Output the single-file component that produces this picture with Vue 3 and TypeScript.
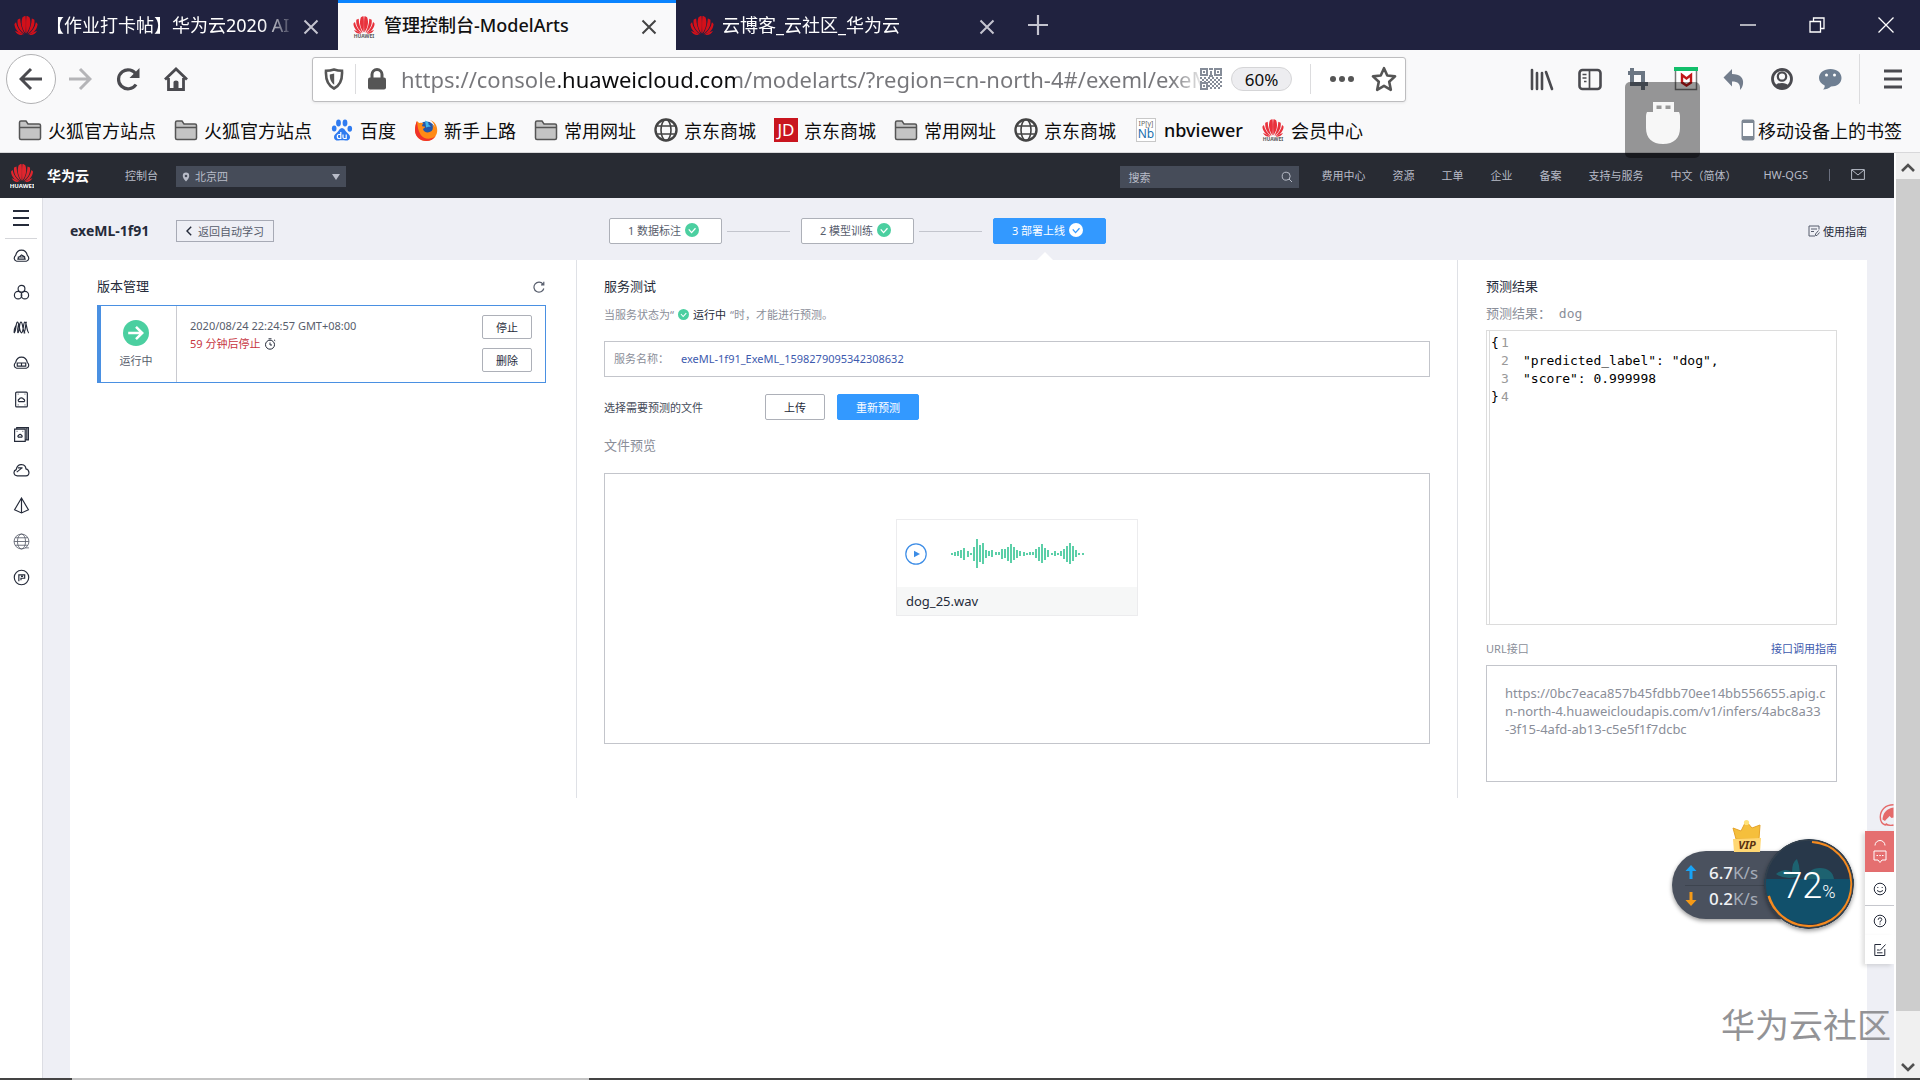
<script setup lang="ts">
import { ref } from 'vue'

interface Tab { title: string; active: boolean }
interface Bookmark { icon: string; label: string }
interface Step { label: string; current: boolean }

const tabs: Tab[] = [
  { title: '【作业打卡帖】华为云2020 AI', active: false },
  { title: '管理控制台-ModelArts', active: true },
  { title: '云博客_云社区_华为云', active: false },
]

const bookmarks: Bookmark[] = [
  { icon: 'folder', label: '火狐官方站点' },
  { icon: 'folder', label: '火狐官方站点' },
  { icon: 'baidu', label: '百度' },
  { icon: 'firefox', label: '新手上路' },
  { icon: 'folder', label: '常用网址' },
  { icon: 'globe', label: '京东商城' },
  { icon: 'jd', label: '京东商城' },
  { icon: 'folder', label: '常用网址' },
  { icon: 'globe', label: '京东商城' },
  { icon: 'nb', label: 'nbviewer' },
  { icon: 'huawei', label: '会员中心' },
]

const toolIcons = ['library', 'sidebar', 'crop', 'mcafee', 'undo', 'account', 'chat']
const toolNames = ['我的足迹', '侧栏', '截图', '安全顾问', '撤销', '账户', '消息']
const headerLinks = ['费用中心', '资源', '工单', '企业', '备案', '支持与服务', '中文（简体）']
const sideIcons = ['cloud-a', 'circles', 'waves', 'cloud-b', 'doc', 'docs', 'cloud-c', 'pyramid', 'net', 'badge']
const sideNames = ['云服务器', '集群', '网络流', '裸金属', '磁盘', '磁盘组', '云容器', '模型', '全球网络', '域名']

const steps: Step[] = [
  { label: '1 数据标注', current: false },
  { label: '2 模型训练', current: false },
  { label: '3 部署上线', current: true },
]

const wave = [2, 4, 5, 8, 12, 6, 2, 14, 29, 17, 21, 8, 5, 7, 3, 3, 10, 9, 14, 19, 13, 8, 5, 4, 2, 3, 3, 9, 14, 19, 12, 7, 2, 5, 2, 5, 10, 16, 21, 15, 7, 2, 2]

const codeLines = [
  { head: '{', text: '' },
  { head: '', text: '"predicted_label": "dog",' },
  { head: '', text: '"score": 0.999998' },
  { head: '}', text: '' },
]

const url = ref('https://console.huaweicloud.com/modelarts/?region=cn-north-4#/exeml/exeML')
const region = ref('北京四')
const keyword = ref('')
</script>

<template>
  <div class="window">
    <svg class="defs" aria-hidden="true">
      <symbol id="i-petals" viewBox="0 0 24 20">
        <path d="M11.6 18.6C8 14 6.6 8 8.4 2.6c.6-1 2-1.6 3.1-1.6.6 4 .5 12 .1 17.600zM12.400 18.600C16 14 17.400 8 15.600 2.600c-.6-1-2-1.600-3.100-1.600-.6 4-.5 12-.1 17.600z" />
        <path d="M10.600 19C6 16 2.800 11 3.600 4.800c.8-.6 1.600-1 2.600-1.200C6.400 9 8 14.500 10.600 19zM13.400 19c4.600-3 7.800-8 7-14.200-.8-.6-1.600-1-2.600-1.200C17.600 9 16 14.500 13.400 19z" />
        <path d="M9.900 19.400C5 18.600 1 15 .4 9.200c.4-.9 1-1.500 1.700-1.900C3 12.500 6 16.500 9.900 19.400zM14.100 19.400c4.900-.8 8.900-4.400 9.500-10.200-.4-.9-1-1.500-1.700-1.900-.9 5.200-3.900 9.200-7.800 12.100z" />
        <path d="M9 20c-3 .3-6-.6-8-4 2 .3 5 2 8 4zM15 20c3 .3 6-.6 8-4-2 .3-5 2-8 4z" />
      </symbol>
      <symbol id="i-close" viewBox="0 0 16 16"><path d="M1.500 1.500l13 13M14.500 1.500l-13 13" fill="none" stroke="currentColor" stroke-width="2" /></symbol>
      <symbol id="i-check" viewBox="0 0 16 16"><circle cx="8" cy="8" r="8" fill="var(--disc)" /><path d="M4.300 7.300l3.200 3.700 4.500-5" fill="none" stroke="var(--tick)" stroke-width="1.500" /></symbol>

      <symbol id="i-folder" viewBox="0 0 24 24"><path d="M1.500 20V4.500q0-1.500 1.500-1.500h5l2 3h11q1.500 0 1.500 1.500V20q0 1.500-1.500 1.500H3q-1.500 0-1.500-1.500zM1.500 9.500h21" fill="#c4c4c4" stroke="#555" stroke-width="1.500" /></symbol>
      <symbol id="i-globe" viewBox="0 0 24 24"><g fill="none" stroke="#444"><circle cx="12" cy="12" r="10.500" stroke-width="2.400" /><ellipse cx="12" cy="12" rx="5" ry="10.500" stroke-width="1.600" /><path d="M2 8h20M2 16h20" stroke-width="1.600" /></g></symbol>
      <symbol id="i-baidu" viewBox="0 0 24 24"><g fill="#2f7bf0"><ellipse cx="8.500" cy="5" rx="2.400" ry="3.400" /><ellipse cx="15" cy="5" rx="2.400" ry="3.400" /><ellipse cx="4.200" cy="10.500" rx="2.300" ry="3" /><ellipse cx="19.800" cy="10.800" rx="2.300" ry="3" /><path d="M12 10c2 0 3 2.300 4.500 4s3.800 3 3.500 5.500c-.3 2.600-2.500 3.300-4.500 3-2.300-.4-4.700-.4-7 0-2 .3-4.200-.4-4.500-3C3.700 17 6 15.700 7.500 14S10 10 12 10z" /></g><path d="M10.800 14v6.500H9q-1.700 0-1.700-2t1.700-2h1.800M13 16.500v2.800q0 1.200 1.200 1.200h2v-4" fill="none" stroke="#fff" stroke-width="1.200" /></symbol>
      <symbol id="i-firefox" viewBox="0 0 24 24"><circle cx="12.500" cy="12" r="8.500" fill="#2456a8" /><path d="M11 2.500c3 1 4 3 3.600 4.500 1.500.3 2 1.200 2 2-2-.5-3 .5-4.500.5z" fill="#3fb5e8" /><path d="M3 3c1 1.200 1.600 1.800 2.600 2C7 4.500 8.500 4.600 9.500 5.200 8.500 6 8 7 8.200 8.200l3 .5c-.2 1.300-1.600 1.600-2.200 2.300.6 3.500 5.600 4.500 8.600 2 1.600-1.500 1.600-4.500.6-6.500 1.400 1 2 2 2.300 3C20.500 6 18.500 3.500 16 2c5 1.500 7.500 6 7.200 11C22.800 19 18 23 12.300 23 6 23 1.300 18.500 1 12.500.9 9 1.800 5.500 3 3z" fill="#ff8a16" /><path d="M1 12.500C1.300 18.500 6 23 12.300 23c4 0 7.500-2 9.500-5-5 4-12 3.500-15-1S3.500 8 3 3C1.800 5.500.9 9 1 12.500z" fill="#f0322b" /></symbol>

      <symbol id="i-library" viewBox="0 0 24 24"><path d="M2 3v19M7 6v16M12 6v16M16 5l6 17" fill="none" stroke="currentColor" stroke-width="2.600" stroke-linecap="round" /></symbol>
      <symbol id="i-sidebar" viewBox="0 0 24 24"><rect x="1.500" y="3" width="21" height="19" rx="3" fill="none" stroke="currentColor" stroke-width="2.600" /><path d="M11.500 3v19M4.500 7.500h4M4.500 11h4M6 14.500h2.500" fill="none" stroke="currentColor" stroke-width="1.700" /></symbol>
      <symbol id="i-crop" viewBox="0 0 24 24"><path d="M6 1v16h16M2 6h15v17" fill="none" stroke="#6b7683" stroke-width="4" /></symbol>
      <symbol id="i-mcafee" viewBox="0 0 24 24"><path d="M1.500 1.500h21v21h-21z" fill="#fff" stroke="#777" stroke-width="1.500" /><path d="M0 0h24v4H0z" fill="#13bf6b" /><path d="M8 8v7.500l4.500 3 4.500-3V8l-4.500 3.500z" fill="none" stroke="#c01818" stroke-width="2.400" /></symbol>
      <symbol id="i-undo" viewBox="0 0 24 24"><path d="M10 2v5c8 0 12 4 11 10-.4 2.500-1.500 4.500-3 6 .7-6-2-8.500-8-8.500v5L1.500 10.500z" fill="#737d8c" /></symbol>
      <symbol id="i-account" viewBox="0 0 24 24"><circle cx="12" cy="12" r="9.500" fill="none" stroke="currentColor" stroke-width="2.800" /><circle cx="12" cy="9.500" r="4.200" fill="none" stroke="currentColor" stroke-width="2.200" /><path d="M5.500 18.500c2-3.500 11-3.500 13 0-3 4-10 4-13 0z" fill="currentColor" /></symbol>
      <symbol id="i-chat" viewBox="0 0 24 24"><path d="M12.500 2C19 2 23.500 5.800 23.500 11S19 19.500 13 19.500c-2 2-5 3-8 3 1.500-1.300 1.800-2.500 1.700-4C3 17 1 14 1 11 1 5.800 6 2 12.500 2z" fill="#6f7f92" /><circle cx="8.500" cy="8" r="1.500" fill="#fff" /><circle cx="16.500" cy="8" r="1.500" fill="#fff" /></symbol>

      <symbol id="i-cloud-a" viewBox="0 0 16 16"><path d="M3.500 12.500C1 12 .3 9 2.500 7 3.200 3.800 5.500 2 8 2s4.800 1.800 5.500 5c2.200 2 1.500 5-1 5.500zM4 10.500h8M5 8.500h6v2H5zM6 8.300L8 6.500l3 1.800" /></symbol>
      <symbol id="i-circles" viewBox="0 0 16 16"><circle cx="8" cy="4.500" r="3.200" /><circle cx="4.800" cy="10.500" r="3.500" /><circle cx="11.200" cy="10.500" r="3.500" /></symbol>
      <symbol id="i-waves" viewBox="0 0 16 16"><path d="M1 13c2 0 1.500-10 3.200-10S6 13 8 13s1.500-10 3.200-10S13 13 15 13M1 13C1 8 2 8 3 6M4.500 13c2 0 1-10 3-10s1.500 10 4 10M4.500 13C4 9 5 6 5.500 4M13 3c-1.500 0-1 10-3 10" /></symbol>
      <symbol id="i-cloud-b" viewBox="0 0 16 16"><path d="M3.500 12.500C1 12 .3 9 2.500 7 3.200 3.800 5.500 2 8 2s4.800 1.800 5.500 5c2.200 2 1.500 5-1 5.500zM3.500 7.500h9M3.500 10.500h9M4 7.500v3M8 7.500v3M12 7.500v3" /></symbol>
      <symbol id="i-doc" viewBox="0 0 16 16"><rect x="2.500" y="1" width="11" height="14" rx="1" /><path d="M5.500 10c-1-.8-.6-2 .4-2.300.4-1.500 3.300-1.700 4 0 1.200.3 1.400 1.700.6 2.300zM4.500 3h.6M11 3h.6M4.500 13h.6M11 13h.6" /></symbol>
      <symbol id="i-docs" viewBox="0 0 16 16"><path d="M1.500 3h10v11.500h-10zM3.500 3V1.500h11V13h-3M13 1.500V13M5 10.500c-.7-.6-.5-1.500.3-1.700.3-1.200 2.200-1.300 2.700 0 .8.200.8 1.200.3 1.700zM3.500 5h.6M9 5h.6" /></symbol>
      <symbol id="i-cloud-c" viewBox="0 0 16 16"><path d="M4 13C.5 13-.2 8.500 3 7.200 3.500 3.500 6 2 8.500 2.500c2.500.3 3.500 2.200 3.700 4 3.500.7 4 6.500 0 6.500zM4.500 5.500h4.500M3.500 9.500L8.500 5.500" /></symbol>
      <symbol id="i-pyramid" viewBox="0 0 16 16"><path d="M8 1L1.500 12 8 15l6.500-3zM8 1v14" /></symbol>
      <symbol id="i-net" viewBox="0 0 16 16"><g stroke="#5a5f6b" stroke-width=".8"><circle cx="8" cy="8" r="7" /><ellipse cx="8" cy="8" rx="3.800" ry="7" /><path d="M1 8h14M2 4.500h12M2 11.500h12M11.500 14h3.500" /></g></symbol>
      <symbol id="i-badge" viewBox="0 0 16 16"><circle cx="8" cy="8" r="6.800" /><path d="M5.500 11.500v-6h5.500v3.200H7.500v2M7.500 7h2" /></symbol>
    </svg>

    <div class="tabbar">
      <div v-for="(tab, i) in tabs" :key="i" class="tab" :class="{ active: tab.active }">
        <svg v-if="tab.active" class="fav" viewBox="0 0 24 24"><use href="#i-petals" x="1" width="22" height="19" fill="#e8323c" /><text class="word" x="12" y="23" text-anchor="middle">HUAWEI</text></svg>
        <svg v-else class="fav fav-red" viewBox="0 0 24 24"><use href="#i-petals" width="24" height="20" /></svg>
        <button class="tab-title">{{ tab.title }}</button>
        <button class="tab-close" aria-label="关闭标签页"><svg><use href="#i-close" /></svg></button>
      </div>
      <button class="new-tab" aria-label="新标签页"><svg viewBox="0 0 22 22"><path d="M11 0v22M0 11h22" stroke="currentColor" stroke-width="2.400" /></svg></button>
      <div class="win-controls">
        <button aria-label="最小化"><svg viewBox="0 0 16 16"><path d="M0 8h16" /></svg></button>
        <button aria-label="还原"><svg viewBox="0 0 16 16"><path d="M1 4.500h10.500V15H1zM4.500 4V1H15v10.500h-3" /></svg></button>
        <button aria-label="关闭"><svg viewBox="0 0 16 16"><path d="M.5.500l15 15M15.500.500l-15 15" /></svg></button>
      </div>
    </div>

    <div class="navbar">
      <div class="nav-left">
        <button class="back" aria-label="后退"><svg viewBox="0 0 24 24"><path d="M23 12H2M12 2L2 12l10 10" fill="none" stroke="currentColor" stroke-width="3" /></svg></button>
        <button class="forward" aria-label="前进"><svg viewBox="0 0 24 24"><path d="M1 12h21M12 2l10 10-10 10" fill="none" stroke="currentColor" stroke-width="3" /></svg></button>
        <button aria-label="刷新"><svg viewBox="0 0 24 24"><path d="M20 17.500A9.500 9.500 0 1 1 20.500 8" fill="none" stroke="currentColor" stroke-width="3.200" /><path d="M23.500 1v10h-10z" fill="currentColor" /></svg></button>
        <button aria-label="主页"><svg viewBox="0 0 24 24"><path d="M1 12.500L12 2l11 10.500M4.500 11v11.500h15V11" fill="none" stroke="currentColor" stroke-width="2.800" /><path d="M9.500 22v-7q0-1.500 2.500-1.500t2.500 1.500v7z" fill="currentColor" /></svg></button>
      </div>
      <div class="urlbar">
        <svg class="shield" viewBox="0 0 20 22"><path d="M10 1.500c3 1 5.500 1.300 8 1.300C18.500 11 17 17 10 20.500 3 17 1.500 11 2 2.800c2.500 0 5-.3 8-1.300z" fill="none" stroke="#555" stroke-width="2.600" /><path d="M10.200 5.500v11.200C6.500 14 5.600 10 5.800 6.500z" fill="#555" /></svg>
        <span class="v-rule"></span>
        <svg class="lock" viewBox="0 0 20 22"><rect x="1" y="9.500" width="18" height="12" rx="2" fill="#555" /><path d="M5 10V6.500a5 5 0 0 1 10 0V10" fill="none" stroke="#555" stroke-width="3" /></svg>
        <input v-model="url" class="url" aria-label="地址" />
        <svg class="qr" viewBox="0 0 22 22"><g fill="none" stroke="#858c98" stroke-width="2"><path d="M1 1h6v6H1zM15 1h6v6h-6zM1 15h6v6H1z" /><path d="M3 4h2M17 4h2M3 18h2" /><path d="M9 1h4M11 3v6M9 8h4" /><path stroke-dasharray="2 2" d="M0 10h22M2 12h20M0 14h22M10 16h12M8 18h14M10 20h12" /></g></svg>
        <button class="zoom">60%</button>
        <span class="v-rule"></span>
        <button class="dots" aria-label="页面操作"><i></i><i></i><i></i></button>
        <button class="star" aria-label="收藏"><svg viewBox="0 0 24 24"><path d="M12 2l3 6.800 7.200.8-5.400 5 1.500 7.400-6.300-3.700L5.700 22l1.500-7.400-5.400-5 7.200-.8z" fill="none" stroke="#555" stroke-width="2.400" stroke-linejoin="round" /></svg></button>
      </div>
      <div class="nav-right">
        <button v-for="(name, i) in toolIcons" :key="name" :aria-label="toolNames[i]"><svg><use :href="'#i-' + name" /></svg></button>
        <span class="v-rule tall"></span>
        <button class="menu" aria-label="菜单"><svg viewBox="0 0 18 20"><path d="M0 2h18M0 10h18M0 18h18" stroke="currentColor" stroke-width="2.800" /></svg></button>
      </div>
    </div>

    <nav class="bookmarks">
      <a v-for="(b, i) in bookmarks" :key="i" href="#" :class="{ latin: b.icon === 'nb' }">
        <span v-if="b.icon === 'jd'" class="jd">JD</span>
        <span v-else-if="b.icon === 'nb'" class="nb"><i>IP[y]</i><b>Nb</b></span>
        <svg v-else-if="b.icon === 'huawei'" viewBox="0 0 24 24"><use href="#i-petals" x="1" width="22" height="19" fill="#e8323c" /><text class="word" x="12" y="23" text-anchor="middle">HUAWEI</text></svg>
        <svg v-else><use :href="'#i-' + b.icon" /></svg>
        {{ b.label }}
      </a>
      <a href="#" class="mobile"><svg viewBox="0 0 14 22"><rect x=".5" y=".5" width="13" height="21" rx="2" fill="#7e8894" /><path d="M2 4h10v13H2z" fill="#fff" /></svg>移动设备上的书签</a>
    </nav>

    <div class="viewport">
      <div class="site">
        <header class="top">
          <svg class="brand-logo" viewBox="0 0 24 26"><use href="#i-petals" width="24" height="19" fill="#e0262e" /><text x="12" y="25" text-anchor="middle">HUAWEI</text></svg>
          <strong class="brand">华为云</strong>
          <a href="#" class="console">控制台</a>
          <label class="region">
            <svg viewBox="0 0 8 10"><path d="M4 9.500C1.500 7 .8 5.500.8 3.800a3.200 3.200 0 0 1 6.400 0C7.200 5.500 6.500 7 4 9.500z" fill="#b8bcc8" /><circle cx="4" cy="4" r="1.300" fill="#464c59" /></svg>
            <select v-model="region" aria-label="区域"><option>北京四</option></select>
          </label>
          <label class="search">
            <input v-model="keyword" placeholder="搜索" aria-label="搜索" />
            <svg viewBox="0 0 12 12"><circle cx="5.200" cy="5.200" r="4" /><path d="M8 8l3 3" /></svg>
          </label>
          <nav class="top-links">
            <a v-for="l in headerLinks" :key="l" href="#">{{ l }}</a>
            <a href="#">HW-QGS</a>
            <span class="bar"></span>
            <a href="#" class="mail" aria-label="消息"><svg viewBox="0 0 14 11"><path d="M.6.600h12.800v9.800H.6zM1 1l6 5 6-5" /></svg></a>
          </nav>
        </header>

        <div class="body">
          <aside class="side">
            <button class="side-menu" aria-label="展开菜单"><i></i><i></i><i></i></button>
            <nav>
              <a v-for="(s, i) in sideIcons" :key="s" href="#" :aria-label="sideNames[i]"><svg><use :href="'#i-' + s" /></svg></a>
            </nav>
          </aside>

          <main class="main">
            <div class="main-head">
              <div class="head-side">
                <h1>exeML-1f91</h1>
                <button class="return"><svg viewBox="0 0 6 10"><path d="M5.200.800L1 5l4.200 4.200" /></svg>返回自动学习</button>
              </div>
              <ol class="steps">
                <li v-for="(s, i) in steps" :key="i" :class="{ current: s.current }">
                  <button>{{ s.label }}<svg><use href="#i-check" /></svg></button>
                </li>
              </ol>
              <div class="head-side end">
                <a href="#" class="guide"><svg viewBox="0 0 12 12"><path d="M7 11H1V1h10v3.500M3 4h6M3 6.500h3M10.500 5.500L7.500 9v1.500H9l2.500-3" /></svg>使用指南</a>
              </div>
            </div>

            <div class="panel">
              <section class="col versions">
                <div class="col-head">
                  <h2>版本管理</h2>
                  <button class="refresh" aria-label="刷新版本"><svg viewBox="0 0 12 12"><path d="M10 3.200A5 5 0 1 0 10.800 7.500M10.800.800v3H8" /></svg></button>
                </div>
                <article class="version">
                  <div class="state">
                    <svg viewBox="0 0 25 25"><circle cx="12.500" cy="12.500" r="12.500" fill="#4bcfa0" /><path d="M5 12.500h13M12.500 6.500l6 6-6 6" fill="none" stroke="#fff" stroke-width="2.400" /></svg>
                    <span>运行中</span>
                  </div>
                  <div class="info">
                    <time>2020/08/24 22:24:57 GMT+08:00</time>
                    <span class="warn">59 分钟后停止<svg viewBox="0 0 12 12"><circle cx="6" cy="6.700" r="4.500" /><path d="M6 4.500V7h2M4.500.800h3M10 1.800l1.200 1" /></svg></span>
                  </div>
                  <div class="ops">
                    <button class="btn small">停止</button>
                    <button class="btn small">删除</button>
                  </div>
                </article>
              </section>

              <section class="col test">
                <h2>服务测试</h2>
                <p class="hint">当服务状态为“<svg><use href="#i-check" /></svg><b>运行中</b>“时，才能进行预测。</p>
                <div class="service"><span>服务名称：</span><a href="#">exeML-1f91_ExeML_1598279095342308632</a></div>
                <div class="picker">
                  <span>选择需要预测的文件</span>
                  <button class="btn">上传</button>
                  <button class="btn primary">重新预测</button>
                </div>
                <h3>文件预览</h3>
                <div class="preview">
                  <figure class="audio">
                    <div class="player">
                      <button class="play" aria-label="播放"><svg viewBox="0 0 22 22"><circle cx="11" cy="11" r="10.200" fill="none" stroke="#3b8ce6" stroke-width="1.200" /><path d="M9 7.800l6 3.200-6 3.200z" fill="#3b8ce6" /></svg></button>
                      <div class="wave"><i v-for="(h, i) in wave" :key="i" :style="{ height: h + 'px' }"></i></div>
                    </div>
                    <figcaption>dog_25.wav</figcaption>
                  </figure>
                </div>
              </section>

              <section class="col result">
                <h2>预测结果</h2>
                <p class="label">预测结果： <span>dog</span></p>
                <div class="editor">
                  <div v-for="(c, i) in codeLines" :key="i" class="line"><span class="brace">{{ c.head }}</span><span class="no">{{ i + 1 }}</span><code>{{ c.text }}</code></div>
                </div>
                <div class="api-head"><span>URL接口</span><a href="#">接口调用指南</a></div>
                <p class="api">https://0bc7eaca857b45fdbb70ee14bb556655.apig.c<br>n-north-4.huaweicloudapis.com/v1/infers/4abc8a33<br>-3f15-4afd-ab13-c5e5f1f7dcbc</p>
              </section>
            </div>
          </main>
        </div>
      </div>

      <div class="scrollbar">
        <svg viewBox="0 0 14 10"><path d="M1 8l6-6 6 6" /></svg>
        <div class="track"><div class="thumb"></div></div>
        <svg viewBox="0 0 14 10"><path d="M1 2l6 6 6-6" /></svg>
      </div>
    </div>

    <div class="taskbar"><i></i></div>

    <div class="usb"><svg viewBox="0 0 34 42"><path d="M7 0h21v10h5q1 2 1 4v12c0 10-6 16-17 16S0 36 0 26V14q0-2 1-4h6z" fill="#f7f7f7" /><path d="M10.500 3.500h5v3.500h-5zM19.500 3.500h5v3.500h-5z" fill="#999" /></svg></div>

    <div class="toolbox">
      <svg class="avatar" viewBox="0 0 14 22"><path d="M14 .8C6 .8.800 6 .8 13c0 4 2 7 5 8l2-1" fill="none" stroke="#e56a6a" stroke-width="1.400" /><path d="M14 3.500C7 4.500 3.500 9 3 15.500l2.500 1.500C6.500 15 9 14 10 12l2 2 2-.5z" fill="#e56a6a" /><path d="M6 20q4 2 8 1" fill="none" stroke="#e56a6a" stroke-width="1.400" /></svg>
      <button class="hot" aria-label="在线咨询"><svg viewBox="0 0 14 26"><path d="M2 6.500a5 5 0 0 1 10 0M1 12h12v9H9l-2 2.500L5 21H1zM3.500 16.500h1.500M6.300 16.500h1.500M9 16.500h1.500" /></svg></button>
      <button class="ruled" aria-label="满意度"><svg viewBox="0 0 14 14"><circle cx="7" cy="7" r="5.800" /><path d="M4 8.500q3 3 6 0M4.800 5v1M9.200 5v1" /></svg></button>
      <button aria-label="帮助"><svg viewBox="0 0 14 14"><circle cx="7" cy="7" r="5.800" /><path d="M5.200 5.800q0-2 1.800-2t1.800 1.700Q8.800 6.600 7 7.500v1M7 9.500v1.200" /></svg></button>
      <button aria-label="反馈"><svg viewBox="0 0 14 14"><path d="M8 1.500H1.800v11h10V6M12.500 1.500L7 7.500M4 7h2.500M4 9.800h5.500" /></svg></button>
    </div>

    <div class="speed">
      <svg class="crown" viewBox="0 0 32 34"><path d="M5 20L2 9l8 3L15 2l6 7 8-3-1 14z" fill="#f5bf3c" stroke="#e5a32a" /><circle cx="15.500" cy="3.500" r="2.600" fill="#ffe27a" /><path d="M2 20l28-1-1 14H3z" fill="#ffd773" /><text x="16" y="30" text-anchor="middle" font-size="11" font-weight="700" font-style="italic">VIP</text></svg>
      <div class="rates">
        <div><svg class="up" viewBox="0 0 12 14"><path d="M6 0l5.500 6h-4v8h-3V6h-4z" /></svg><b>6.7</b>K/s</div>
        <div><svg class="down" viewBox="0 0 12 14"><path d="M6 14l5.500-6h-4V0h-3v8h-4z" /></svg><b>0.2</b>K/s</div>
      </div>
      <div class="gauge">
        <svg viewBox="0 0 90 90"><circle cx="45" cy="45" r="45" fill="#28384a" /><path d="M0 40a45 45 0 1 0 90 0z" fill="#11506b" /><path d="M12 35q8-7 16-2 0-10 5-13 4 10 2 17-12 5-23-2zM43 40c0-7 5-11 13-11s13 4 14 11z" fill="#1d6270" /><path d="M48 2.600A42.500 42.500 0 1 1 4.500 57" fill="none" stroke="#f58a1f" stroke-width="3" /><circle cx="45" cy="45" r="44" fill="none" stroke="#33404d" stroke-width="1.500" /></svg>
        <span>72<small>%</small></span>
      </div>
    </div>

    <div class="watermark">华为云社区</div>
  </div>
</template>

<style>
body { margin: 0; background: #fff; }
</style>

<style scoped>
.window { position: relative; display: flex; flex-direction: column; min-height: 100vh; overflow: hidden; font-family: "Noto Sans", "Noto Sans CJK SC", sans-serif; font-size: 11px; color: #252b3a; }
.window * { box-sizing: border-box; }
.defs { position: absolute; width: 0; height: 0; }
button { display: flex; align-items: center; justify-content: center; margin: 0; padding: 0; border: 0; background: none; font: inherit; color: inherit; }
input, select { margin: 0; padding: 0; border: 0; background: none; font: inherit; color: inherit; outline: 0; }
a { color: inherit; text-decoration: none; }
svg { flex: none; display: block; }
h1, h2, h3, p, ol, figure { margin: 0; padding: 0; }
.word { font-size: 5px; font-weight: 700; fill: #555; }

.tabbar { display: flex; height: 50px; background: #20223f; color: #fff; font-size: 18px; }
.tab { display: flex; align-items: center; width: 338px; padding: 0 18px 0 14px; border-top: 3px solid transparent; }
.tab.active { background: #f9f9fa; color: #111; border-color: #0a84ff; }
.tab:last-of-type { border-right: 1px solid #5a5c74; }
.fav { width: 24px; height: 24px; margin-right: 8px; }
.fav-red { fill: #d3101a; }
.tab-title { flex: 1; min-width: 0; height: 44px; padding-bottom: 6px; justify-content: flex-start; white-space: nowrap; mask-image: linear-gradient(to right, #000 216px, transparent 250px); }
.tab.active .tab-title { mask-image: none; font-weight: 500; }
.tab-close { width: 18px; height: 18px; color: #c4c4cf; margin-left: 6px; }
.tab.active .tab-close { color: #444; }
.tab-close svg { width: 16px; height: 16px; }
.new-tab { width: 48px; color: #c4c4cf; }
.new-tab svg { width: 20px; height: 20px; }
.win-controls { display: flex; margin-left: auto; }
.win-controls button { width: 69px; }
.win-controls svg { width: 16px; height: 16px; fill: none; stroke: #fff; stroke-width: 1.300; }

.navbar { display: flex; align-items: center; height: 58px; padding-left: 6px; background: #f9f9fa; color: #4a4a4f; }
.nav-left { display: flex; align-items: center; width: 306px; }
.nav-left button { width: 48px; height: 50px; }
.nav-left svg { width: 24px; height: 24px; }
.nav-left .back { width: 50px; border: 1px solid #b1b1b3; border-radius: 50%; background: #fff; }
.nav-left .forward { color: #b5b5b8; }
.urlbar { display: flex; align-items: center; flex: 1; height: 45px; padding: 0 8px 0 11px; border: 1px solid #bdbdbf; border-radius: 3px; background: #fff; box-shadow: 0 1px 3px rgba(0, 0, 0, .08); }
.shield, .lock { width: 20px; height: 22px; }
.v-rule { width: 1px; height: 30px; background: #dcdcde; margin: 0 11px; }
.v-rule.tall { height: 50px; margin: 0 5px; }
.url { flex: 1; min-width: 0; height: 36px; margin: 0 0 0 14px; font-size: 22px; background: linear-gradient(to right, #76767a 158px, #0c0c0d 158px, #0c0c0d 334px, #76767a 334px, #76767a 770px, transparent 806px); background-clip: text; -webkit-text-fill-color: transparent; }
.qr { width: 22px; height: 22px; }
.zoom { width: 61px; height: 24px; margin-left: 9px; border: 1px solid #d5d5d7; border-radius: 12px; background: #ededf0; color: #0c0c0d; font-size: 17px; }
.zoom + .v-rule { margin: 0 18px 0 18px; }
.dots { gap: 3px; width: 26px; height: 24px; }
.dots i { width: 6px; height: 6px; border-radius: 50%; background: #555; }
.star { margin-left: 16px; }
.star svg { width: 26px; height: 26px; }
.nav-right { display: flex; align-items: center; padding-left: 112px; }
.nav-right button { width: 48px; height: 48px; }
.nav-right svg { width: 24px; height: 24px; }
.nav-right .menu { width: 55px; }
.nav-right .menu svg { width: 18px; height: 20px; }

.bookmarks { display: flex; align-items: center; gap: 18px; height: 45px; padding: 0 18px; border-bottom: 1px solid #d8d8da; background: #f9f9fa; color: #0c0c0d; font-size: 18px; white-space: nowrap; }
.bookmarks a { display: flex; align-items: center; gap: 6px; }
.bookmarks svg { width: 24px; height: 24px; }
.bookmarks .latin { font-weight: 500; }
.jd { width: 24px; height: 24px; background: #c9151e; color: #fff; font-size: 17px; line-height: 24px; text-align: center; }
.nb { display: flex; flex-direction: column; align-items: center; width: 20px; height: 24px; margin: 0 2px; border: 1px solid #c8c8c8; background: #fff; font-weight: 400; }
.nb i { height: 9px; font-size: 7px; font-style: normal; line-height: 9px; color: #666; }
.nb b { height: 13px; font-size: 12px; font-weight: 400; line-height: 12px; color: #1b6fae; }
.bookmarks .mobile { margin-left: auto; gap: 3px; }
.bookmarks .mobile svg { width: 14px; height: 22px; }

.viewport { display: flex; flex: 1; }
.site { display: flex; flex-direction: column; flex: 1; min-width: 0; }
.top { display: flex; align-items: center; height: 45px; padding: 0 29px 0 10px; background: #282b33; color: #b8bcc8; white-space: nowrap; }
.brand-logo { width: 24px; height: 26px; fill: #fff; font-size: 6px; font-weight: 700; }
.brand { margin-left: 13px; padding-bottom: 2px; color: #fff; font-size: 14px; }
.console { margin-left: 36px; padding-bottom: 2px; }
.region { display: flex; align-items: center; width: 170px; height: 21px; margin: 2px 0 0 18px; padding: 0 6px; background: #464c59; }
.region svg { width: 8px; height: 10px; }
.region select { flex: 1; padding-left: 5px; appearance: none; }
.region::after { content: ""; border: 4px solid transparent; border-top: 6px solid #b8bcc8; border-bottom: 0; }
.search { display: flex; align-items: center; width: 179px; height: 22px; margin: 3px 0 0 auto; padding: 0 6px 0 8px; background: #464c59; }
.search input { flex: 1; min-width: 0; }
.search input::placeholder { color: #b8bcc8; opacity: 1; }
.search svg { width: 12px; height: 12px; fill: none; stroke: #b8bcc8; }
.top-links { display: flex; align-items: center; gap: 27px; margin-left: 22px; padding-bottom: 2px; }
.bar { width: 1px; height: 12px; margin: 0 -6px; background: #6b7080; }
.mail svg { width: 14px; height: 11px; fill: none; stroke: #b8bcc8; }

.body { display: flex; flex: 1; }
.side { display: flex; flex-direction: column; align-items: center; width: 43px; background: #fff; border-right: 1px solid #dcdde3; }
.side-menu { flex-direction: column; gap: 5px; width: 32px; height: 41px; border-bottom: 1px solid #d5d6da; }
.side-menu i { width: 16px; height: 2px; background: #252b3a; }
.side nav { display: flex; flex-direction: column; height: 356px; }
.side a { display: flex; align-items: center; justify-content: center; flex: 1; width: 42px; }
.side svg { width: 17px; height: 17px; fill: none; stroke: #252b3a; stroke-width: 1.100; }

.main { display: flex; flex-direction: column; flex: 1; min-width: 0; padding: 0 27px; background: #eeeff5; }
.main-head { display: flex; align-items: center; height: 62px; padding-top: 4px; }
.head-side { display: flex; align-items: center; width: 539px; }
.head-side.end { flex: 1; width: auto; justify-content: flex-end; }
h1 { width: 106px; font-size: 14px; line-height: 20px; }
.return { gap: 6px; width: 98px; height: 22px; border: 1px solid #a7aab5; color: #575d6c; }
.return svg { width: 6px; height: 10px; fill: none; stroke: #252b3a; stroke-width: 1.400; }
.steps { display: flex; list-style: none; --disc: #4bcfa0; --tick: #fff; }
.steps li { position: relative; display: flex; align-items: center; }
.steps li + li::before { content: ""; width: 63px; height: 1px; margin: 0 11px 0 5px; background: #c3c5cd; }
.steps button { gap: 4px; width: 113px; height: 26px; padding: 0 4px 2px 0; border: 1px solid #adb0b8; border-radius: 2px; background: #fff; color: #575d6c; }
.steps svg { width: 14px; height: 14px; }
.steps .current button { border-color: #3399ff; background: #3399ff; color: #fff; --disc: #fff; --tick: #3399ff; }
.steps .current::after { content: ""; position: absolute; right: 53px; bottom: -16px; border: 8px solid transparent; border-bottom-color: #fff; border-top: 0; }
.guide { display: flex; gap: 3px; align-items: center; }
.guide svg { width: 12px; height: 12px; fill: none; stroke: #575d6c; }

.panel { display: flex; align-items: flex-start; flex: 1; background: #fff; }
.col { min-width: 0; height: 538px; padding: 16px 27px 0; }
h2 { padding-bottom: 1px; font-size: 13px; font-weight: 400; line-height: 20px; }
.versions { flex: 0 0 507px; padding-right: 30px; border-right: 1px solid #dfe1e6; }
.col-head { display: flex; justify-content: space-between; align-items: center; }
.refresh { width: 14px; height: 14px; }
.refresh svg { width: 12px; height: 12px; fill: none; stroke: #575d6c; stroke-width: 1.200; }
.version { display: flex; height: 78px; margin-top: 8px; border: 1px solid #4a90e2; border-left-width: 4px; }
.state { display: flex; flex-direction: column; align-items: center; gap: 7px; width: 76px; padding: 14px 5px 0 0; border-right: 1px solid #c9cad0; color: #575d6c; line-height: 16px; }
.state svg { width: 26px; height: 26px; }
.info { flex: 1; padding: 11px 0 0 13px; line-height: 18px; color: #575d6c; }
.info time, .warn { display: flex; align-items: center; gap: 4px; }
.info .warn { color: #c7363f; }
.warn svg { width: 12px; height: 12px; fill: none; stroke: #252b3a; }
.ops { display: flex; flex-direction: column; gap: 9px; padding: 9px 13px 0 0; }
.btn { width: 60px; height: 26px; border: 1px solid #adb0b8; border-radius: 2px; background: #fff; color: #252b3a; }
.btn.small { width: 50px; height: 24px; }
.btn.primary { width: 82px; border-color: #3399ff; background: #3399ff; color: #fff; }
.test { flex: 1; }
.hint { display: flex; align-items: center; height: 20px; margin-top: 7px; color: #8a8e99; --disc: #4bcfa0; --tick: #fff; }
.hint svg { width: 11px; height: 11px; margin: 0 4px; }
.hint b { font-weight: 400; color: #252b3a; margin-right: 4px; }
.service { display: flex; align-items: center; height: 36px; margin-top: 17px; padding: 0 0 2px 9px; border: 1px solid #c3c5cb; }
.service span { width: 67px; color: #8a8e99; }
.service a, .api-head a { color: #3d5aae; }
.picker { display: flex; align-items: center; margin-top: 17px; gap: 12px; }
.picker span { width: 149px; color: #444a58; }
h3 { margin-top: 15px; font-size: 13px; font-weight: 400; line-height: 20px; color: #8a8e99; }
.preview { display: flex; justify-content: center; align-items: flex-start; height: 271px; margin-top: 18px; padding-top: 45px; border: 1px solid #c3c5cb; }
.audio { width: 242px; border: 1px solid #ececee; }
.player { display: flex; align-items: center; height: 67px; padding-left: 8px; }
.play, .play svg { width: 22px; height: 22px; }
.wave { display: flex; align-items: center; justify-content: space-between; width: 133px; margin-left: 24px; }
.wave i { width: 2px; background: #5ccfa8; }
figcaption { height: 28px; padding-left: 9px; background: #f6f7f7; font-size: 13px; line-height: 28px; }
.result { flex: 0 0 410px; padding: 16px 30px 0 28px; border-left: 1px solid #dfe1e6; }
.label { height: 20px; margin-top: 7px; color: #8a8e99; font-size: 13px; line-height: 20px; font-family: "DejaVu Sans Mono", "Noto Sans CJK SC", monospace; }
.editor { height: 295px; margin-top: 6px; padding-top: 3px; border: 1px solid #dcdcdc; box-shadow: inset 2px 0 #fff, inset 3px 0 #dcdcdc; font: 13px/18px "DejaVu Sans Mono", monospace; color: #000; }
.line { display: flex; height: 18px; padding-left: 4px; }
.brace { width: 10px; }
.no { width: 22px; color: #999; }
code { font: inherit; }
.api-head { display: flex; justify-content: space-between; margin-top: 16px; line-height: 16px; color: #8a8e99; }
.api { height: 117px; margin-top: 8px; padding: 18px 10px 18px 18px; border: 1px solid #c3c5cb; font-size: 13px; line-height: 18px; color: #8a8e99; white-space: nowrap; }

.scrollbar { display: flex; flex-direction: column; align-items: center; width: 26px; padding: 10px 0 6px; border-left: 2px solid #fff; background: #f0f0f0; }
.scrollbar svg { width: 14px; height: 10px; fill: none; stroke: #505050; stroke-width: 2.600; }
.track { flex: 1; width: 100%; padding: 6px 0 51px; display: flex; }
.thumb { flex: 1; background: #cdcdcd; }
.taskbar { height: 2px; padding-left: 72px; background: #444; }
.taskbar i { display: block; width: 28%; height: 2px; background: #c4c4c4; }

.usb { position: absolute; top: 82px; right: 220px; display: flex; justify-content: center; width: 75px; height: 76px; padding-top: 20px; border-radius: 5px; background: rgba(0, 0, 0, .4); }
.usb svg { width: 34px; height: 42px; }
.toolbox { position: absolute; top: 804px; right: 26px; display: flex; flex-direction: column; align-items: flex-end; width: 29px; }
.toolbox .avatar { width: 15px; height: 22px; margin-bottom: 5px; }
.toolbox button { width: 29px; height: 29px; background: #fff; box-shadow: -3px 2px 4px rgba(0, 0, 0, .12); }
.toolbox button svg { width: 14px; height: 14px; fill: none; stroke: #252b3a; }
.toolbox .hot { height: 41px; background: #e56f70; }
.toolbox .hot svg { height: 26px; stroke: #fff; }
.toolbox .ruled { height: 34px; border-bottom: 1px solid #c9cad0; }
.speed { position: absolute; top: 839px; right: 66px; width: 182px; height: 90px; display: flex; align-items: center; justify-content: space-between; }
.rates { width: 110px; height: 68px; margin-top: 2px; padding: 8px 0 0 13px; border-radius: 34px 0 0 34px; background: #4a515e; box-shadow: 0 2px 4px rgba(0, 0, 0, .4), 20px 0 #4a515e; font-size: 17px; color: #a5acb8; }
.rates div { display: flex; align-items: center; height: 26px; }
.rates div + div { border-top: 1px solid #3d444f; }
.rates svg { width: 12px; height: 14px; margin-right: 12px; }
.rates b { font-weight: 500; color: #f0f2f5; }
.up { fill: #18a3f5; }
.down { fill: #f59a17; }
.crown { position: absolute; left: 59px; top: -20px; width: 32px; height: 34px; fill: #5b3210; z-index: 1; }
.gauge { position: absolute; right: 0; top: 0; width: 90px; height: 90px; display: flex; align-items: center; justify-content: center; }
.gauge svg { position: absolute; width: 90px; height: 90px; border-radius: 50%; box-shadow: 0 2px 4px rgba(0, 0, 0, .4); }
.gauge span { position: relative; margin-top: 4px; color: #fff; font: 300 36px Roboto, sans-serif; }
.gauge small { font-size: 18px; }
.watermark { position: absolute; right: 29px; bottom: 31px; color: #939396; font-size: 34px; line-height: 48px; }
</style>
